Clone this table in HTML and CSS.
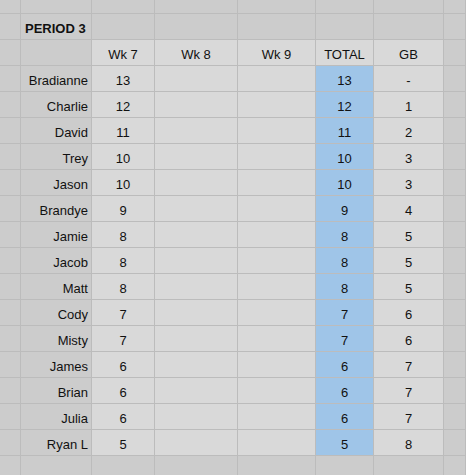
FILE: index.html
```html
<!DOCTYPE html>
<html>
<head>
<meta charset="utf-8">
<link rel="stylesheet" href="styles.css">
</head>
<body>
<div class="sheet">
  <div class="c"></div><div class="c"></div><div class="c"></div><div class="c"></div><div class="c"></div><div class="c"></div><div class="c"></div><div class="c"></div>

  <div class="c"></div><div class="c title">PERIOD 3</div><div class="c"></div><div class="c"></div><div class="c"></div><div class="c"></div><div class="c"></div><div class="c"></div>

  <div class="c"></div><div class="c"></div><div class="c l num">Wk 7</div><div class="c l num">Wk 8</div><div class="c l num">Wk 9</div><div class="c l num">TOTAL</div><div class="c l num">GB</div><div class="c"></div>

  <div class="c"></div><div class="c name">Bradianne</div><div class="c l num">13</div><div class="c l"></div><div class="c l"></div><div class="c b num">13</div><div class="c l num">-</div><div class="c"></div>
  <div class="c"></div><div class="c name">Charlie</div><div class="c l num">12</div><div class="c l"></div><div class="c l"></div><div class="c b num">12</div><div class="c l num">1</div><div class="c"></div>
  <div class="c"></div><div class="c name">David</div><div class="c l num">11</div><div class="c l"></div><div class="c l"></div><div class="c b num">11</div><div class="c l num">2</div><div class="c"></div>
  <div class="c"></div><div class="c name">Trey</div><div class="c l num">10</div><div class="c l"></div><div class="c l"></div><div class="c b num">10</div><div class="c l num">3</div><div class="c"></div>
  <div class="c"></div><div class="c name">Jason</div><div class="c l num">10</div><div class="c l"></div><div class="c l"></div><div class="c b num">10</div><div class="c l num">3</div><div class="c"></div>
  <div class="c"></div><div class="c name">Brandye</div><div class="c l num">9</div><div class="c l"></div><div class="c l"></div><div class="c b num">9</div><div class="c l num">4</div><div class="c"></div>
  <div class="c"></div><div class="c name">Jamie</div><div class="c l num">8</div><div class="c l"></div><div class="c l"></div><div class="c b num">8</div><div class="c l num">5</div><div class="c"></div>
  <div class="c"></div><div class="c name">Jacob</div><div class="c l num">8</div><div class="c l"></div><div class="c l"></div><div class="c b num">8</div><div class="c l num">5</div><div class="c"></div>
  <div class="c"></div><div class="c name">Matt</div><div class="c l num">8</div><div class="c l"></div><div class="c l"></div><div class="c b num">8</div><div class="c l num">5</div><div class="c"></div>
  <div class="c"></div><div class="c name">Cody</div><div class="c l num">7</div><div class="c l"></div><div class="c l"></div><div class="c b num">7</div><div class="c l num">6</div><div class="c"></div>
  <div class="c"></div><div class="c name">Misty</div><div class="c l num">7</div><div class="c l"></div><div class="c l"></div><div class="c b num">7</div><div class="c l num">6</div><div class="c"></div>
  <div class="c"></div><div class="c name">James</div><div class="c l num">6</div><div class="c l"></div><div class="c l"></div><div class="c b num">6</div><div class="c l num">7</div><div class="c"></div>
  <div class="c"></div><div class="c name">Brian</div><div class="c l num">6</div><div class="c l"></div><div class="c l"></div><div class="c b num">6</div><div class="c l num">7</div><div class="c"></div>
  <div class="c"></div><div class="c name">Julia</div><div class="c l num">6</div><div class="c l"></div><div class="c l"></div><div class="c b num">6</div><div class="c l num">7</div><div class="c"></div>
  <div class="c"></div><div class="c name">Ryan L</div><div class="c l num">5</div><div class="c l"></div><div class="c l"></div><div class="c b num">5</div><div class="c l num">8</div><div class="c"></div>

  <div class="c"></div><div class="c"></div><div class="c"></div><div class="c"></div><div class="c"></div><div class="c"></div><div class="c"></div><div class="c"></div>
</div>
</body>
</html>
```
FILE: styles.css
```css
html, body {
  margin: 0;
  padding: 0;
  background: #cccccc;
}

.sheet {
  display: grid;
  grid-template-columns: 21px 71px 63px 83px 78px 58px 70px 22px;
  grid-template-rows: 14px repeat(17, 26px) 20px;
  width: 466px;
  height: 475px;
  overflow: hidden;
  font-family: "Liberation Sans", Arial, sans-serif;
  font-size: 13px;
  color: #111111;
}

.c {
  box-sizing: border-box;
  background: #cccccc;
  border-right: 1px solid #bcbcbc;
  border-bottom: 1px solid #bcbcbc;
  line-height: 21px;
  padding-top: 4px;
  white-space: nowrap;
  overflow: hidden;
}

.l {
  background: #d9d9d9;
}

.b {
  background: #9fc5e8;
}

.num {
  text-align: center;
}

.name {
  text-align: right;
  padding-right: 3px;
}

.title {
  font-weight: bold;
  padding-left: 4px;
}
```
